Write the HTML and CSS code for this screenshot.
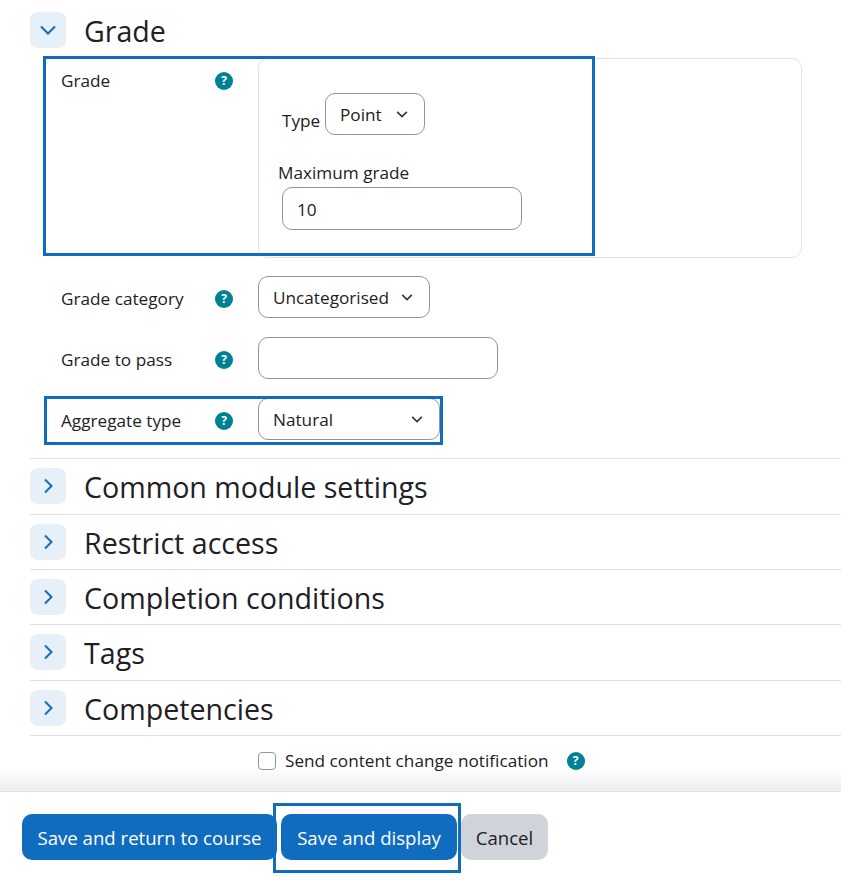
FILE: index.html
```html
<!DOCTYPE html>
<html lang="en">
  <head>
    <meta charset="UTF-8" />
    <title>Grade settings</title>
    <link rel="stylesheet" href="styles.css">
  </head>
  <body>
    <form class="page">
      <div class="content">
        <div class="section-head open">
          <span class="toggle">
            <svg width="16" height="16" viewBox="0 0 16 16"><path d="M1 4.5l7 7 7-7" /></svg>
          </span>
          <h3>Grade</h3>
        </div>

        <div class="row row-grade">
          <div class="highlight hl-grade"></div>
          <div class="label">
            <span>Grade</span>
            <span class="help">?</span>
          </div>
          <div class="card">
            <div class="type-line">
              <label>Type</label>
              <select class="select sel-type"><option>Point</option></select>
            </div>
            <label class="max-label">Maximum grade</label>
            <input class="input input-max" type="text" value="10" />
          </div>
        </div>

        <div class="row row-cat">
          <div class="label">
            <span>Grade category</span>
            <span class="help">?</span>
          </div>
          <select class="select sel-cat"><option>Uncategorised</option></select>
        </div>

        <div class="row">
          <div class="label">
            <span>Grade to pass</span>
            <span class="help">?</span>
          </div>
          <input class="input input-pass" type="text" />
        </div>

        <div class="row">
          <div class="highlight hl-aggregate"></div>
          <div class="label">
            <span>Aggregate type</span>
            <span class="help">?</span>
          </div>
          <select class="select sel-agg"><option>Natural</option></select>
        </div>

        <div class="sections">
          <div class="section-head closed">
            <span class="toggle">
              <svg width="16" height="16" viewBox="0 0 16 16"><path d="M5 1.5l6.5 6.5-6.5 6.5" /></svg>
            </span>
            <h3>Common module settings</h3>
          </div>
          <div class="section-head closed">
            <span class="toggle">
              <svg width="16" height="16" viewBox="0 0 16 16"><path d="M5 1.5l6.5 6.5-6.5 6.5" /></svg>
            </span>
            <h3>Restrict access</h3>
          </div>
          <div class="section-head closed">
            <span class="toggle">
              <svg width="16" height="16" viewBox="0 0 16 16"><path d="M5 1.5l6.5 6.5-6.5 6.5" /></svg>
            </span>
            <h3>Completion conditions</h3>
          </div>
          <div class="section-head closed">
            <span class="toggle">
              <svg width="16" height="16" viewBox="0 0 16 16"><path d="M5 1.5l6.5 6.5-6.5 6.5" /></svg>
            </span>
            <h3>Tags</h3>
          </div>
          <div class="section-head closed">
            <span class="toggle">
              <svg width="16" height="16" viewBox="0 0 16 16"><path d="M5 1.5l6.5 6.5-6.5 6.5" /></svg>
            </span>
            <h3>Competencies</h3>
          </div>
        </div>

        <div class="notify">
          <input class="check" type="checkbox" />
          <span>Send content change notification</span>
          <span class="help">?</span>
        </div>
      </div>

      <div class="footer">
        <button class="btn btn-primary btn-return" type="button">Save and return to course</button>
        <span class="display-wrap">
          <span class="highlight hl-display"></span>
          <button class="btn btn-primary btn-display" type="button">Save and display</button>
        </span>
        <button class="btn btn-cancel" type="button">Cancel</button>
      </div>
    </form>
  </body>
</html>
```

FILE: styles.css
```css
* {
  box-sizing: border-box;
}
body {
  margin: 0;
  background-color: white;
  color: #1d2125;
  font-family: "Open Sans", "Noto Sans", sans-serif;
  font-size: 17.2px;
  overflow: hidden;
}
.page {
  height: 876px;
  display: flex;
  flex-direction: column;
}
.content {
  flex: 1;
  padding: 12px 0 0 30px;
  background: linear-gradient(to bottom, white 768px, #eeeeee 790px);
}
.section-head {
  display: flex;
  align-items: flex-start;
  gap: 18px;
}
.section-head h3 {
  margin: 0;
  font-size: 28.6px;
  font-weight: 400;
  line-height: 38px;
}
.section-head.closed {
  height: 55.4px;
  border-top: 1px solid #dee2e6;
  padding-top: 9px;
}
.toggle {
  width: 36px;
  height: 36px;
  border-radius: 8px;
  background-color: #e7eff8;
  display: flex;
  align-items: center;
  justify-content: center;
}
.toggle svg path {
  fill: none;
  stroke: #0f6cbf;
  stroke-width: 2;
}
.row {
  position: relative;
  display: flex;
  align-items: center;
  margin-top: 19px;
}
.row-grade {
  align-items: flex-start;
  margin-top: 8px;
}
.row-cat {
  margin-top: 18px;
}
.label {
  width: 228px;
  flex-shrink: 0;
  padding-left: 31px;
  padding-top: 3px;
  display: flex;
  align-items: center;
}
.label > span:first-child {
  width: 154px;
}
.row-grade .label {
  padding-top: 11px;
}
.help {
  width: 18px;
  height: 18px;
  border-radius: 50%;
  background-color: #008196;
  color: white;
  font-size: 12px;
  font-weight: 700;
  line-height: 18px;
  text-align: center;
  flex-shrink: 0;
}
.card {
  width: 544px;
  height: 200px;
  border: 1px solid #dee2e6;
  border-radius: 10px;
  padding: 34px 0 0 19px;
}
.type-line {
  display: flex;
  align-items: flex-end;
  gap: 5px;
  padding-left: 4px;
}
.type-line label {
  width: 38px;
  padding-bottom: 3px;
}
.max-label {
  display: block;
  margin-top: 26px;
  line-height: 24px;
}
.select,
.input {
  height: 42px;
  border: 1px solid #8f959e;
  border-radius: 10px;
  background-color: white;
  color: #1d2125;
  font: inherit;
  padding: 0 14px;
}
.select {
  appearance: none;
  background-image: url("data:image/svg+xml,%3Csvg xmlns='http://www.w3.org/2000/svg' width='16' height='16' viewBox='0 0 16 16'%3E%3Cpath d='M2.5 5.5L8 11l5.5-5.5' fill='none' stroke='%23343a40' stroke-width='2'/%3E%3C/svg%3E");
  background-repeat: no-repeat;
  background-position: right 15px center;
  background-size: 14px 14px;
}
.sel-type {
  width: 100px;
}
.sel-cat {
  width: 172px;
}
.sel-agg {
  width: 182px;
}
.input-max {
  display: block;
  width: 240px;
  height: 43px;
  margin: 2px 0 0 4px;
  padding-top: 2px;
}
.input-pass {
  width: 240px;
}
.sections {
  margin-top: 18.2px;
}
.notify {
  display: flex;
  align-items: center;
  padding-left: 228px;
  height: 50px;
  border-top: 1px solid #dee2e6;
}
.notify span:nth-child(2) {
  margin-left: 9px;
  margin-right: 18px;
}
.check {
  appearance: none;
  width: 18px;
  height: 18px;
  margin: 0;
  border: 1px solid #8f959e;
  border-radius: 4px;
  background-color: white;
}
.footer {
  height: 85px;
  border-top: 1px solid #dee2e6;
  background-color: white;
  display: flex;
  align-items: flex-start;
  gap: 4px;
  padding: 22px 0 0 22px;
}
.btn {
  height: 46px;
  border: none;
  border-radius: 10px;
  font-family: inherit;
  font-size: 18.6px;
  padding: 0;
}
.btn-primary {
  background-color: #0f6cbf;
  color: white;
}
.btn-return {
  width: 255px;
}
.btn-display {
  display: block;
  width: 176px;
}
.btn-cancel {
  width: 87px;
  background-color: #ced4da;
  color: #1d2125;
}
.display-wrap {
  position: relative;
}
/* blue boxes drawn over the form */
.highlight {
  position: absolute;
  border: 3px solid #0f6cbf;
  pointer-events: none;
}
.hl-grade {
  left: 13px;
  top: -2px;
  width: 552px;
  height: 200px;
}
.hl-aggregate {
  left: 14px;
  top: -2px;
  width: 399px;
  height: 49px;
}
.hl-display {
  left: -8px;
  top: -11px;
  width: 188px;
  height: 70px;
}
```
